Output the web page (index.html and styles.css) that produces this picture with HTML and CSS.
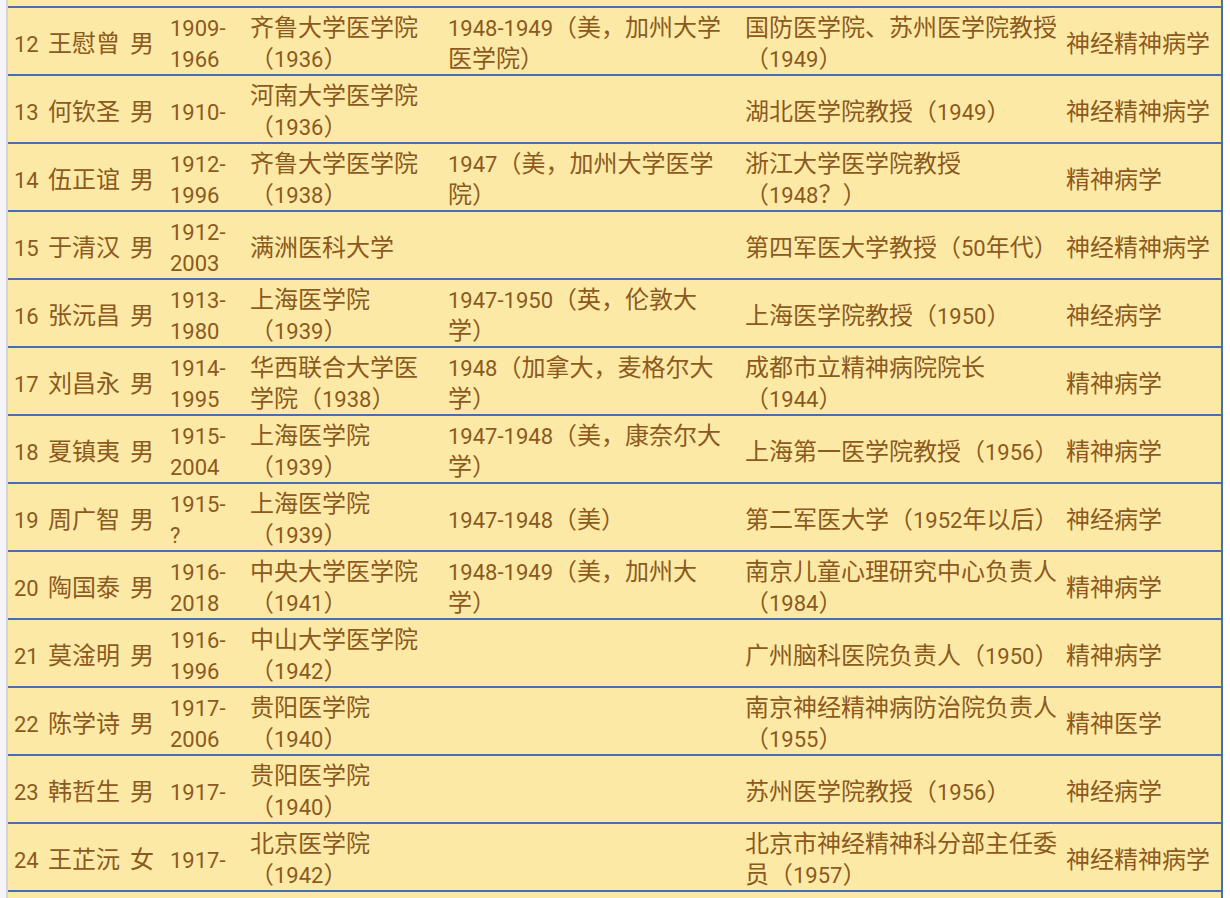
FILE: index.html
```html
<!DOCTYPE html>
<html lang="zh-CN">
<head>
<meta charset="utf-8">
<title>神经精神病学者</title>
<link rel="stylesheet" href="styles.css">
</head>
<body>
<div class="page">
  <div class="gutter"></div>
  <table class="roster">
    <colgroup>
      <col class="c-no"><col class="c-name"><col class="c-sex"><col class="c-life"><col class="c-school"><col class="c-abroad"><col class="c-post"><col class="c-field">
    </colgroup>
    <tbody>
      <tr class="cut"><td></td><td></td><td></td><td class="life"></td><td class="school"></td><td></td><td></td><td></td></tr>
      <tr><td><span class="n">12</span></td><td>王慰曾</td><td>男</td><td class="life"><span class="n">1909-1966</span></td><td class="school">齐鲁大学医学院（<span class="n">1936</span>）</td><td><span class="n">1948-1949</span>（美，加州大学医学院）</td><td>国防医学院、苏州医学院教授（<span class="n">1949</span>）</td><td>神经精神病学</td></tr>
      <tr><td><span class="n">13</span></td><td>何钦圣</td><td>男</td><td class="life"><span class="n">1910-</span></td><td class="school">河南大学医学院（<span class="n">1936</span>）</td><td></td><td>湖北医学院教授（<span class="n">1949</span>）</td><td>神经精神病学</td></tr>
      <tr><td><span class="n">14</span></td><td>伍正谊</td><td>男</td><td class="life"><span class="n">1912-1996</span></td><td class="school">齐鲁大学医学院（<span class="n">1938</span>）</td><td><span class="n">1947</span>（美，加州大学医学院）</td><td>浙江大学医学院教授（<span class="n">1948</span>？）</td><td>精神病学</td></tr>
      <tr><td><span class="n">15</span></td><td>于清汉</td><td>男</td><td class="life"><span class="n">1912-2003</span></td><td class="school">满洲医科大学</td><td></td><td>第四军医大学教授（<span class="n">50</span>年代）</td><td>神经精神病学</td></tr>
      <tr><td><span class="n">16</span></td><td>张沅昌</td><td>男</td><td class="life"><span class="n">1913-1980</span></td><td class="school">上海医学院（<span class="n">1939</span>）</td><td><span class="n">1947-1950</span>（英，伦敦大<br>学）</td><td>上海医学院教授（<span class="n">1950</span>）</td><td>神经病学</td></tr>
      <tr><td><span class="n">17</span></td><td>刘昌永</td><td>男</td><td class="life"><span class="n">1914-1995</span></td><td class="school">华西联合大学医学院（<span class="n">1938</span>）</td><td><span class="n">1948</span>（加拿大，麦格尔大学）</td><td>成都市立精神病院院长（<span class="n">1944</span>）</td><td>精神病学</td></tr>
      <tr><td><span class="n">18</span></td><td>夏镇夷</td><td>男</td><td class="life"><span class="n">1915-2004</span></td><td class="school">上海医学院（<span class="n">1939</span>）</td><td><span class="n">1947-1948</span>（美，康奈尔大学）</td><td>上海第一医学院教授（<span class="n">1956</span>）</td><td>精神病学</td></tr>
      <tr><td><span class="n">19</span></td><td>周广智</td><td>男</td><td class="life"><span class="n">1915-</span><br><span class="n">?</span></td><td class="school">上海医学院（<span class="n">1939</span>）</td><td><span class="n">1947-1948</span>（美）</td><td>第二军医大学（<span class="n">1952</span>年以后）</td><td>神经病学</td></tr>
      <tr><td><span class="n">20</span></td><td>陶国泰</td><td>男</td><td class="life"><span class="n">1916-2018</span></td><td class="school">中央大学医学院（<span class="n">1941</span>）</td><td><span class="n">1948-1949</span>（美，加州大<br>学）</td><td>南京儿童心理研究中心负责人（<span class="n">1984</span>）</td><td>精神病学</td></tr>
      <tr><td><span class="n">21</span></td><td>莫淦明</td><td>男</td><td class="life"><span class="n">1916-1996</span></td><td class="school">中山大学医学院（<span class="n">1942</span>）</td><td></td><td>广州脑科医院负责人（<span class="n">1950</span>）</td><td>精神病学</td></tr>
      <tr><td><span class="n">22</span></td><td>陈学诗</td><td>男</td><td class="life"><span class="n">1917-2006</span></td><td class="school">贵阳医学院（<span class="n">1940</span>）</td><td></td><td>南京神经精神病防治院负责人（<span class="n">1955</span>）</td><td>精神医学</td></tr>
      <tr><td><span class="n">23</span></td><td>韩哲生</td><td>男</td><td class="life"><span class="n">1917-</span></td><td class="school">贵阳医学院（<span class="n">1940</span>）</td><td></td><td>苏州医学院教授（<span class="n">1956</span>）</td><td>神经病学</td></tr>
      <tr><td><span class="n">24</span></td><td>王芷沅</td><td>女</td><td class="life"><span class="n">1917-</span></td><td class="school">北京医学院（<span class="n">1942</span>）</td><td></td><td>北京市神经精神科分部主任委员（<span class="n">1957</span>）</td><td>神经精神病学</td></tr>
      <tr><td></td><td></td><td></td><td class="life"></td><td class="school"></td><td></td><td></td><td></td></tr>
    </tbody>
  </table>
</div>
</body>
</html>
```
FILE: styles.css
```css
html, body {
  margin: 0;
  padding: 0;
  background: #ffffff;
}

.page {
  display: flex;
  align-items: flex-start;
}

.gutter {
  width: 6px;
  align-self: stretch;
  background: #f5f5f7;
  border-right: 2px solid #d3d4de;
}

.roster {
  border-collapse: collapse;
  table-layout: fixed;
  width: 1214px;
  background: #fde9a6;
  color: #8b5a1e;
  font-family: "Noto Sans CJK SC", sans-serif;
  font-size: 24px;
  line-height: 31px;
  border-right: 2px solid #4a6cb3;
}

.c-no { width: 34px; }
.c-name { width: 82px; }
.c-sex { width: 40px; }
.c-life { width: 80px; }
.c-school { width: 198px; }
.c-abroad { width: 297px; }
.c-post { width: 321px; }
.c-field { width: 162px; }

.roster td {
  height: 66px;
  padding: 0 0 0 6px;
  vertical-align: middle;
  border-bottom: 2px solid #4a6cb3;
  overflow: hidden;
  word-break: normal;
  line-break: strict;
  text-spacing-trim: space-all;
}

.roster td.life {
  padding-right: 14px;
}

.roster td.school {
  padding-right: 12px;
}

.n {
  font-family: "Roboto", "Noto Sans CJK SC", sans-serif;
  font-size: 22px;
  line-height: 1;
}

.roster tr.cut td {
  height: 6px;
  line-height: 6px;
}
```
